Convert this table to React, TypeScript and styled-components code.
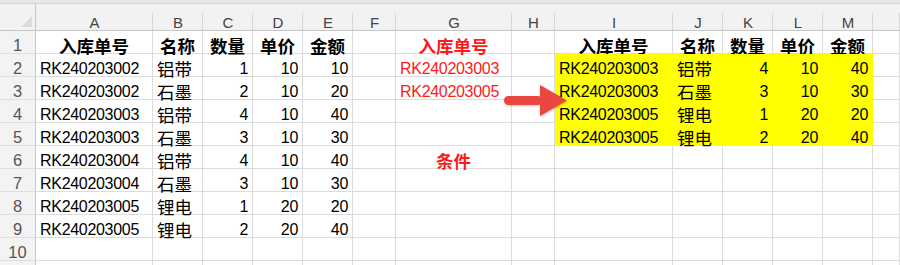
import React from "react";
import styled, { createGlobalStyle, css } from "styled-components";

const GlobalStyle = createGlobalStyle`
  html, body {
    margin: 0;
    padding: 0;
    background: #ffffff;
  }
  body {
    font-family: "Liberation Sans", "Noto Sans CJK SC", sans-serif;
  }
`;

const COLS = [36, 117, 50, 50, 50, 50, 43, 116, 43, 118, 50, 50, 50, 50];
const LETTERS = ["A", "B", "C", "D", "E", "F", "G", "H", "I", "J", "K", "L", "M", ""];

const Sheet = styled.div`
  position: relative;
  width: 900px;
  height: 265px;
  overflow: hidden;
  background: #ffffff;
`;

const TopStrip = styled.div`
  height: 3px;
  background: #e6e6e6;
  border-bottom: 1px solid #d4d4d4;
`;

const Grid = styled.div`
  display: grid;
  grid-template-columns: ${COLS.map((w) => `${w}px`).join(" ")} 1fr;
  grid-template-rows: 27px;
  grid-auto-rows: 23px;
`;

const HeaderRow = styled.div`
  display: contents;
`;

const Corner = styled.div`
  position: relative;
  background: #f2f2f2;
  border-right: 1px solid #c6c6c6;
  border-bottom: 1px solid #c6c6c6;
  box-sizing: border-box;

  &::after {
    content: "";
    position: absolute;
    right: 3px;
    bottom: 3px;
    border-left: 11px solid transparent;
    border-bottom: 11px solid #dcdcdc;
  }
`;

const ColHead = styled.div`
  box-sizing: border-box;
  background: #f2f2f2;
  border-bottom: 1px solid #c6c6c6;
  display: flex;
  align-items: flex-end;
  justify-content: center;
  font-size: 15px;
  line-height: 15px;
  color: #444444;
  position: relative;

  &::after {
    content: "";
    position: absolute;
    right: 0;
    top: 9px;
    bottom: 0;
    width: 1px;
    background: #d6d6d6;
  }
`;

const RowHead = styled.div`
  box-sizing: border-box;
  background: #f3f3f3;
  border-right: 1px solid #c6c6c6;
  border-bottom: 1px solid #dedede;
  display: flex;
  align-items: center;
  justify-content: center;
  padding-top: 6px;
  font-size: 16.5px;
  color: #555555;
`;

type Align = "left" | "center" | "right";

const Cell = styled.div<{ $align: Align; $bold?: boolean; $red?: boolean; $fill?: boolean }>`
  box-sizing: border-box;
  border-right: 1px solid #dcdcdc;
  border-bottom: 1px solid #dcdcdc;
  display: flex;
  align-items: center;
  padding: 7px 4px 0 4px;
  white-space: nowrap;
  font-size: 16px;
  letter-spacing: -0.3px;
  color: #000000;
  justify-content: ${(p) =>
    p.$align === "left" ? "flex-start" : p.$align === "right" ? "flex-end" : "center"};
  ${(p) => p.$bold && css`font-weight: 700;`}
  ${(p) => p.$red && css`color: #ff1a1a;`}
  ${(p) =>
    p.$fill &&
    css`
      background: #ffff00;
      border-color: #ffff00;
    `}
`;

const Han = styled.span`
  font-family: "Noto Sans CJK SC", sans-serif;
  font-size: 17.5px;
  letter-spacing: 0;
  line-height: 1;
`;

const Arrow = styled.svg`
  position: absolute;
  left: 502px;
  top: 84px;
  width: 68px;
  height: 34px;
  overflow: visible;
`;

type CellData = {
  v?: string | number;
  align?: Align;
  bold?: boolean;
  red?: boolean;
  fill?: boolean;
};

const headers = ["入库单号", "名称", "数量", "单价", "金额"];

const source: [string, string, number, number, number][] = [
  ["RK240203002", "铝带", 1, 10, 10],
  ["RK240203002", "石墨", 2, 10, 20],
  ["RK240203003", "铝带", 4, 10, 40],
  ["RK240203003", "石墨", 3, 10, 30],
  ["RK240203004", "铝带", 4, 10, 40],
  ["RK240203004", "石墨", 3, 10, 30],
  ["RK240203005", "锂电", 1, 20, 20],
  ["RK240203005", "锂电", 2, 20, 40],
];

const result = [source[2], source[3], source[6], source[7]];

function recordCells(rec: (string | number)[] | undefined, fill: boolean): CellData[] {
  if (!rec) return [{}, {}, {}, {}, {}];
  return rec.map((v, i) => ({ v, align: i < 2 ? "left" : "right", fill }));
}

function buildRows(): CellData[][] {
  const rows: CellData[][] = [];
  // row 1: headers
  rows.push([
    ...headers.map((h) => ({ v: h, align: "center" as Align, bold: true })),
    {},
    { v: "入库单号", align: "center", bold: true, red: true },
    {},
    ...headers.map((h) => ({ v: h, align: "center" as Align, bold: true })),
    {},
  ]);
  const criteria: Record<number, CellData> = {
    0: { v: "RK240203003", align: "left", red: true },
    1: { v: "RK240203005", align: "left", red: true },
    4: { v: "条件", align: "center", bold: true, red: true },
  };
  for (let i = 0; i < 9; i++) {
    rows.push([
      ...recordCells(source[i], false),
      {},
      criteria[i] ?? {},
      {},
      ...recordCells(result[i], !!result[i]),
      {},
    ]);
  }
  // partially visible row 11
  rows.push(Array.from({ length: 14 }, () => ({})));
  return rows;
}

function renderValue(v: string | number | undefined) {
  if (v === undefined) return null;
  const s = String(v);
  return /[\u4e00-\u9fff]/.test(s) ? <Han>{s}</Han> : s;
}

export default function App() {
  const rows = buildRows();
  return (
    <Sheet>
      <GlobalStyle />
      <TopStrip />
      <Grid>
        <HeaderRow>
          <Corner />
          {LETTERS.map((l, i) => (
            <ColHead key={i}>{l}</ColHead>
          ))}
        </HeaderRow>
        {rows.map((row, r) => (
          <React.Fragment key={r}>
            <RowHead>{r < 10 ? r + 1 : ""}</RowHead>
            {row.map((c, ci) => (
              <Cell
                key={ci}
                $align={c.align ?? "left"}
                $bold={c.bold}
                $red={c.red}
                $fill={c.fill}
              >
                {renderValue(c.v)}
              </Cell>
            ))}
          </React.Fragment>
        ))}
      </Grid>
      <Arrow viewBox="0 0 68 34">
        <defs>
          <filter id="sh" x="-20%" y="-30%" width="140%" height="160%">
            <feDropShadow dx="0.5" dy="1" stdDeviation="0.8" floodColor="#000" floodOpacity="0.25" />
          </filter>
        </defs>
        <g filter="url(#sh)" fill="#ea4640">
          <rect x="2" y="12" width="38" height="9" rx="4.5" />
          <polygon points="38,1 38,32 65,16.5" />
        </g>
      </Arrow>
    </Sheet>
  );
}
